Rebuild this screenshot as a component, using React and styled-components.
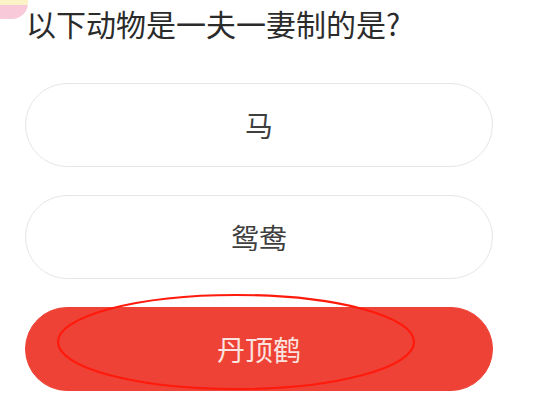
import React from 'react'
import styled, { createGlobalStyle } from 'styled-components'

const GlobalStyle = createGlobalStyle`
  html, body {
    margin: 0;
    padding: 0;
    background: #ffffff;
  }
  body {
    font-family: "Noto Sans CJK SC", "Noto Sans", sans-serif;
  }
`

const Page = styled.div`
  position: relative;
  width: 533px;
  height: 402px;
  overflow: hidden;
  background: #fff;
  padding: 5px 40px 0 25px;
  box-sizing: border-box;
`

const Sticker = styled.div`
  position: absolute;
  left: -14px;
  top: -22px;
  width: 42px;
  height: 41px;
  border-radius: 0 0 16px 12px;
  background: linear-gradient(180deg, #fbf1c0 0 66%, #f7c4d5 66% 100%);
  opacity: 0.9;
`

const Question = styled.h1`
  margin: 0 0 42px 1px;
  font-size: 30px;
  line-height: 36px;
  font-weight: 400;
  color: #2b2b2b;
`

const Options = styled.div`
  display: flex;
  flex-direction: column;
  gap: 28px;
`

const Option = styled.div`
  height: 84px;
  border-radius: 42px;
  box-sizing: border-box;
  display: flex;
  align-items: center;
  justify-content: center;
  font-size: 28px;
  color: ${p => (p.$picked ? '#fbe3df' : '#3f3f3f')};
  background: ${p => (p.$picked ? '#ee4236' : '#ffffff')};
  border: 1.5px solid ${p => (p.$picked ? '#ee4236' : '#e6e6e6')};
`

const Mark = styled.svg`
  position: absolute;
  left: 0;
  top: 0;
  pointer-events: none;
`

const options = [
  { label: '马' },
  { label: '鸳鸯' },
  { label: '丹顶鹤', picked: true },
]

export default () => {
  return (
    <>
      <GlobalStyle />
      <Page>
        <Sticker />
        <Question>以下动物是一夫一妻制的是?</Question>
        <Options>
          {options.map(o => (
            <Option key={o.label} $picked={o.picked}>{o.label}</Option>
          ))}
        </Options>
        <Mark width="533" height="402" viewBox="0 0 533 402">
          <ellipse cx="236" cy="342" rx="178" ry="47" fill="none" stroke="#ff1a0c" strokeWidth="2.2" />
        </Mark>
      </Page>
    </>
  )
}
